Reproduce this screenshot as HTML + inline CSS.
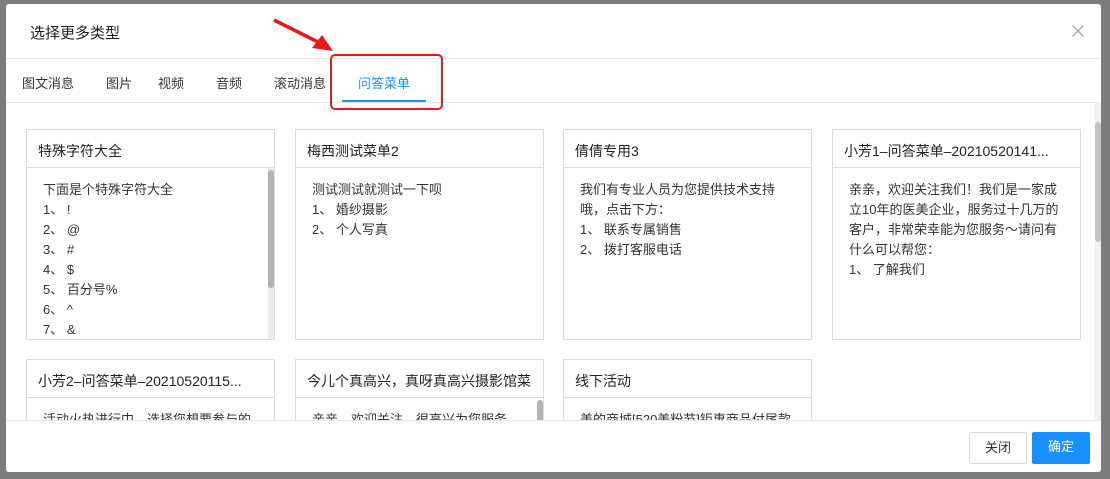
<!DOCTYPE html>
<html><head><meta charset="utf-8"><style>
*{box-sizing:border-box;margin:0;padding:0}
body{width:1110px;height:479px;overflow:hidden;background:#7c7c7c;font-family:"Liberation Sans","Noto Sans CJK SC",sans-serif;position:relative;color:#333}
.dlg{position:absolute;left:6px;top:4px;width:1095px;height:468px;background:#fff;border-radius:3px;overflow:hidden}
.title{position:absolute;left:24px;top:18px;font-size:15px;color:#222}
.x{position:absolute;left:1066px;top:21px;width:12px;height:12px}
.hl{position:absolute;left:0;width:100%;height:1px;background:#e8e8e8}
.tab{position:absolute;top:69px;font-size:13px;color:#333}
.card{position:absolute;width:249px;border:1px solid #dcdcdc;background:#fff;overflow:hidden}
.ch{height:38px;border-bottom:1px solid #dcdcdc;padding:11px 0 0 11px;font-size:14px;color:#222;white-space:nowrap}
.cb{padding:12px 16px 0 16px;font-size:13px;line-height:20px;color:#333}
.sb{position:absolute;right:0;top:38px;width:6px;bottom:0;background:#ececec}
.sb i{position:absolute;left:0;width:6px;border-radius:3px;background:#b4b4b4}
.foot{position:absolute;left:0;top:416px;width:100%;height:52px;background:#fff;border-top:1px solid #e8e8e8}
.btn{position:absolute;top:11px;height:32px;width:58px;font-size:13px;text-align:center;line-height:30px;border-radius:2px}
</style></head><body>
<div class="dlg">
<div class="title">选择更多类型</div>
<svg class="x" viewBox="0 0 12 12"><path d="M0.5 0.5L11.5 11.5M11.5 0.5L0.5 11.5" stroke="#999" stroke-width="1.2"/></svg>
<div class="hl" style="top:54px"></div>
<div class="tab" style="left:16px">图文消息</div>
<div class="tab" style="left:100px">图片</div>
<div class="tab" style="left:152px">视频</div>
<div class="tab" style="left:210px">音频</div>
<div class="tab" style="left:268px">滚动消息</div>
<div class="tab" style="left:352px;color:#1890ff">问答菜单</div>
<div style="position:absolute;left:336px;top:96px;width:84px;height:2px;background:#1890ff"></div>
<div class="hl" style="top:98px"></div>

<div class="card" style="left:20px;top:125px;height:211px"><div class="ch">特殊字符大全</div><div class="cb">下面是个特殊字符大全<br>1、 !<br>2、 @<br>3、 #<br>4、 $<br>5、 百分号%<br>6、 ^<br>7、 &amp;</div><div class="sb"><i style="top:2px;height:118px"></i></div></div>
<div class="card" style="left:289px;top:125px;height:211px"><div class="ch">梅西测试菜单2</div><div class="cb">测试测试就测试一下呗<br>1、 婚纱摄影<br>2、 个人写真</div></div>
<div class="card" style="left:557px;top:125px;height:211px"><div class="ch">倩倩专用3</div><div class="cb">我们有专业人员为您提供技术支持哦，点击下方：<br>1、 联系专属销售<br>2、 拨打客服电话</div></div>
<div class="card" style="left:826px;top:125px;height:211px"><div class="ch">小芳1–问答菜单–20210520141...</div><div class="cb">亲亲，欢迎关注我们！我们是一家成立10年的医美企业，服务过十几万的客户，非常荣幸能为您服务～请问有什么可以帮您：<br>1、 了解我们</div></div>
<div class="card" style="left:20px;top:355px;height:120px"><div class="ch">小芳2–问答菜单–20210520115...</div><div class="cb">活动火热进行中，选择您想要参与的</div></div>
<div class="card" style="left:289px;top:355px;height:120px"><div class="ch">今儿个真高兴，真呀真高兴摄影馆菜</div><div class="cb">亲亲，欢迎关注，很高兴为您服务</div><div class="sb" style="background:#fff"><i style="top:2px;height:40px"></i></div></div>
<div class="card" style="left:557px;top:355px;height:120px"><div class="ch">线下活动</div><div class="cb">美的商城[520美粉节]钜惠商品付尾款</div></div>

<div class="foot">
<div class="btn" style="left:963px;border:1px solid #d9d9d9;color:#333">关闭</div>
<div class="btn" style="left:1026px;background:#1890ff;color:#fff">确定</div>
</div>
<div style="position:absolute;left:1089px;top:98px;width:6px;height:318px;background:#f0f0f0"><i style="position:absolute;left:0;top:20px;width:6px;height:120px;border-radius:3px;background:#c4c4c4"></i></div>
</div>
<div style="position:absolute;left:330px;top:54px;width:113px;height:56px;border:2.5px solid #e61a1a;border-radius:5px"></div>
<svg style="position:absolute;left:0;top:0" width="1110" height="479"><path d="M274 20L318 42" stroke="#e61a1a" stroke-width="3.5"/><path d="M333 51L312 48L322 35Z" fill="#e61a1a"/></svg>
</body></html>
